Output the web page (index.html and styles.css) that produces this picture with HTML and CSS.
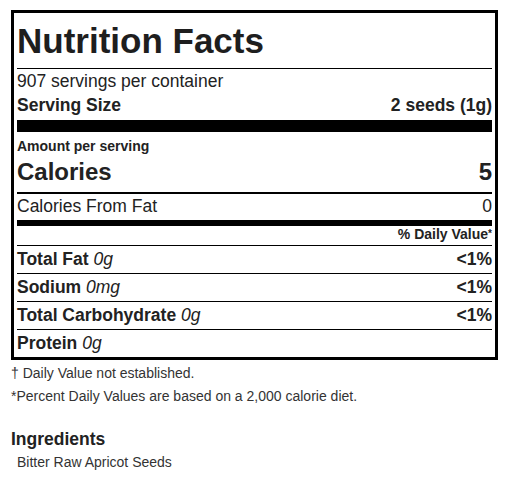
FILE: index.html
```html
<!DOCTYPE html>
<html lang="en">
<head>
  <meta charset="UTF-8" />
  <title>Nutrition Facts</title>
  <link rel="stylesheet" href="styles.css">
</head>
<body>
  <div class="page">
    <div class="label">
      <h1 class="title">Nutrition Facts</h1>
      <div class="servings">907 servings per container</div>
      <div class="serving-size">
        <span>Serving Size</span>
        <span>2 seeds (1g)</span>
      </div>
      <div class="bar thick"></div>
      <div class="amount">Amount per serving</div>
      <div class="calories">
        <span>Calories</span>
        <span>5</span>
      </div>
      <div class="cal-fat">
        <span>Calories From Fat</span>
        <span>0</span>
      </div>
      <div class="bar medium"></div>
      <div class="dv-head">% Daily Value<span class="star">*</span></div>
      <div class="nutrient">
        <span><b>Total Fat</b> <i>0g</i></span>
        <b>&lt;1%</b>
      </div>
      <div class="nutrient">
        <span><b>Sodium</b> <i>0mg</i></span>
        <b>&lt;1%</b>
      </div>
      <div class="nutrient">
        <span><b>Total Carbohydrate</b> <i>0g</i></span>
        <b>&lt;1%</b>
      </div>
      <div class="nutrient last">
        <span><b>Protein</b> <i>0g</i></span>
      </div>
    </div>

    <p class="note first">† Daily Value not established.</p>
    <p class="note">*Percent Daily Values are based on a 2,000 calorie diet.</p>

    <h2 class="ingr-title">Ingredients</h2>
    <p class="ingr">Bitter Raw Apricot Seeds</p>
  </div>
</body>
</html>
```

FILE: styles.css
```css
body {
  margin: 0;
  font-family: "Liberation Sans", Arial, sans-serif;
  color: #222;
  background: #fff;
}
.page {
  padding: 10px 0 0 11px;
}
.label {
  width: 475px;
  border: 3px solid #000;
  padding: 0 3px;
}
.title {
  font-size: 35px;
  line-height: 38px;
  font-weight: bold;
  margin: 9px 0 0;
  padding-bottom: 8px;
  border-bottom: 1px solid #000;
  color: #1e1e1e;
}
.servings {
  font-size: 17.5px;
  line-height: 20px;
  margin-top: 2px;
}
.serving-size,
.calories,
.cal-fat,
.nutrient {
  display: flex;
  justify-content: space-between;
  align-items: baseline;
}
.serving-size {
  font-size: 17.5px;
  line-height: 20px;
  font-weight: bold;
  margin-top: 4px;
}
.bar {
  background: #000;
}
.bar.thick {
  height: 12px;
  margin-top: 5px;
}
.bar.medium {
  height: 6px;
  margin-top: 4px;
}
.amount {
  font-size: 14px;
  line-height: 16px;
  font-weight: bold;
  margin-top: 6px;
}
.calories {
  font-size: 24px;
  line-height: 28px;
  font-weight: bold;
  margin-top: 4px;
  padding-bottom: 6px;
  border-bottom: 2px solid #000;
}
.cal-fat {
  font-size: 17.5px;
  line-height: 20px;
  margin-top: 2px;
}
.dv-head {
  font-size: 14px;
  line-height: 16px;
  font-weight: bold;
  text-align: right;
  padding-bottom: 3px;
  border-bottom: 1px solid #000;
}
.dv-head .star {
  font-size: 10px;
  vertical-align: 2px;
}
.nutrient {
  font-size: 17.5px;
  line-height: 27px;
  border-bottom: 1px solid #000;
}
.nutrient i {
  font-weight: normal;
}
.nutrient.last {
  border-bottom: none;
}
.note {
  margin: 0;
  font-size: 14px;
  line-height: 23px;
  color: #333;
}
.note.first {
  margin-top: 2px;
}
.ingr-title {
  font-size: 17.5px;
  line-height: 20px;
  font-weight: bold;
  margin: 21px 0 0;
}
.ingr {
  margin: 3px 0 0;
  padding-left: 6px;
  font-size: 14px;
  line-height: 20px;
  color: #333;
}
```
